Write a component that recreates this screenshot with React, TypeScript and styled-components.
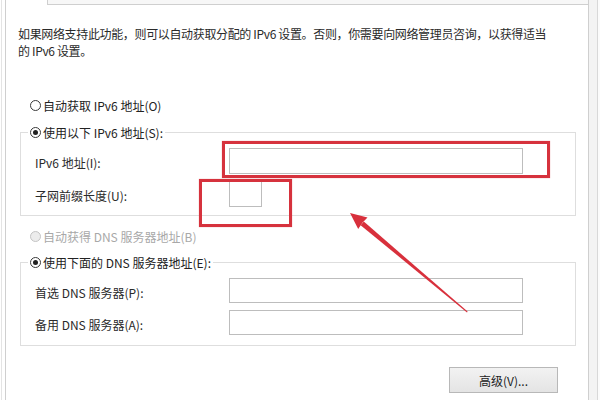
import React from "react";
import styled, { createGlobalStyle } from "styled-components";

const GlobalStyle = createGlobalStyle`
	html, body {
		margin: 0;
		padding: 0;
		background: #ffffff;
	}
	body {
		font-family: "Noto Sans CJK SC", "Noto Sans", sans-serif;
		font-size: 12px;
		color: #222222;
	}
`;

const Page = styled.div`
	position: relative;
	width: 600px;
	height: 400px;
	overflow: hidden;
	display: flex;
	background: #ffffff;
`;

const Panel = styled.div`
	margin-left: 5px;
	width: 582px;
	height: 100%;
	border-left: 1px solid #cfcfcf;
	border-right: 1px solid #cfcfcf;
	box-shadow: -3px 0 0 #ffffff, -4px 0 0 #e4e4e4;
	display: flex;
	flex-direction: column;
`;

const RightFrame = styled.div`
	flex: 1;
	background: linear-gradient(to right, #f3f3f3 0, #f3f3f3 8px, #d8d8d8 8px, #d8d8d8 9px, #fbfbfb 9px);
`;

const TabRow = styled.div`
	display: flex;
	height: 5px;
	margin-right: -1px;
`;

const ActiveTab = styled.div`
	width: 41px;
	border-right: 1px solid #cfcfcf;
	background: #ffffff;
`;

const TabLine = styled.div`
	flex: 1;
	background: #f7f7f7;
	border-bottom: 1px solid #cfcfcf;
	border-right: 1px solid #cfcfcf;
`;

const Content = styled.div`
	padding: 0 12px;
	display: flex;
	flex-direction: column;
`;

const Description = styled.p`
	margin: 20px 0 0 0;
	max-width: 530px;
	line-height: 17px;
	letter-spacing: -0.35px;
	color: #2a2a2a;
`;

const RadioRow = styled.label<{ $disabled?: boolean; $top: number }>`
	display: flex;
	align-items: center;
	height: 18px;
	margin-top: ${(p) => p.$top}px;
	padding-left: 12px;
	color: ${(p) => (p.$disabled ? "#a8a8a8" : "#222222")};
	white-space: nowrap;
`;

const RadioDot = styled.span<{ $checked?: boolean; $disabled?: boolean }>`
	box-sizing: border-box;
	width: 11px;
	height: 11px;
	margin-right: 2px;
	border-radius: 50%;
	border: 1px solid ${(p) => (p.$disabled ? "#c4c4c4" : "#3a3a3a")};
	background: ${(p) => (p.$disabled ? "#ececec" : "#ffffff")};
	display: flex;
	align-items: center;
	justify-content: center;
	flex-shrink: 0;

	&::after {
		content: "";
		display: ${(p) => (p.$checked ? "block" : "none")};
		width: 5px;
		height: 5px;
		border-radius: 50%;
		background: #222222;
	}
`;

const Group = styled.fieldset<{ $top: number; $bottom: number }>`
	margin: ${(p) => p.$top}px 0 0 2px;
	padding: 7px 14px ${(p) => p.$bottom}px 14px;
	border: 1px solid #dedede;
	min-width: 0;
	display: flex;
	flex-direction: column;
	gap: 7px;
`;

const Legend = styled.legend`
	margin-left: -7px;
	padding: 0 2px;
	height: 18px;
	display: flex;
	align-items: center;
	white-space: nowrap;
	color: #222222;
`;

const FieldRow = styled.div<{ $height: number }>`
	display: flex;
	align-items: center;
	height: ${(p) => p.$height}px;
`;

const FieldLabel = styled.span`
	width: 194px;
	flex-shrink: 0;
	padding-top: 3px;
	color: #2a2a2a;
`;

const TextBox = styled.div<{ $width: number }>`
	box-sizing: border-box;
	width: ${(p) => p.$width}px;
	height: 100%;
	border: 1px solid #bdbdbd;
	background: #ffffff;
`;

const ButtonRow = styled.div`
	display: flex;
	justify-content: flex-end;
	padding-right: 18px;
	margin-top: 21px;
`;

const Button = styled.button`
	box-sizing: border-box;
	width: 109px;
	height: 26px;
	border: 1px solid #b8b8b8;
	background: linear-gradient(#f2f2f2, #e4e4e4);
	font-family: "Noto Sans CJK SC", "Noto Sans", sans-serif;
	font-size: 12px;
	color: #222222;
	padding: 0;
`;

const Overlay = styled.svg`
	position: absolute;
	top: 0;
	left: 0;
	pointer-events: none;
`;

const Highlight = styled.div<{ $x: number; $y: number; $w: number; $h: number }>`
	position: absolute;
	box-sizing: border-box;
	left: ${(p) => p.$x}px;
	top: ${(p) => p.$y}px;
	width: ${(p) => p.$w}px;
	height: ${(p) => p.$h}px;
	border: 3px solid #d6323d;
	box-shadow: 0 0 1px rgba(214, 50, 61, 0.5);
`;

const Arrow = () => (
	<Overlay width={600} height={400} viewBox="0 0 600 400">
		<polygon
			points="363.8,221.6 360.6,225.2 467,312.4 467.6,311.6"
			fill="#d8303c"
		/>
		<polygon
			points="350,213 367.5,217.5 362.6,222.6 358.2,229 "
			fill="#d8303c"
		/>
	</Overlay>
);

export default function App() {
	return (
		<>
			<GlobalStyle />
			<Page>
				<Panel>
					<TabRow>
						<ActiveTab />
						<TabLine />
					</TabRow>
					<Content>
						<Description>
							如果网络支持此功能，则可以自动获取分配的 IPv6 设置。否则，你需要向网络管理员咨询，以获得适当的 IPv6 设置。
						</Description>

						<RadioRow $top={37}>
							<RadioDot />
							自动获取 IPv6 地址(O)
						</RadioRow>

						<Group $top={9} $bottom={8}>
							<Legend>
								<RadioDot $checked />
								使用以下 IPv6 地址(S):
							</Legend>
							<FieldRow $height={26}>
								<FieldLabel>IPv6 地址(I):</FieldLabel>
								<TextBox $width={294} />
							</FieldRow>
							<FieldRow $height={26}>
								<FieldLabel>子网前缀长度(U):</FieldLabel>
								<TextBox $width={33} />
							</FieldRow>
						</Group>

						<RadioRow $top={11} $disabled>
							<RadioDot $disabled />
							自动获得 DNS 服务器地址(B)
						</RadioRow>

						<Group $top={8} $bottom={10}>
							<Legend>
								<RadioDot $checked />
								使用下面的 DNS 服务器地址(E):
							</Legend>
							<FieldRow $height={25}>
								<FieldLabel>首选 DNS 服务器(P):</FieldLabel>
								<TextBox $width={294} />
							</FieldRow>
							<FieldRow $height={25}>
								<FieldLabel>备用 DNS 服务器(A):</FieldLabel>
								<TextBox $width={294} />
							</FieldRow>
						</Group>

						<ButtonRow>
							<Button>高级(V)...</Button>
						</ButtonRow>
					</Content>
				</Panel>
				<RightFrame />

				<Highlight $x={222} $y={141} $w={328} $h={37} />
				<Highlight $x={199} $y={179} $w={93} $h={48} />
				<Arrow />
			</Page>
		</>
	);
}
